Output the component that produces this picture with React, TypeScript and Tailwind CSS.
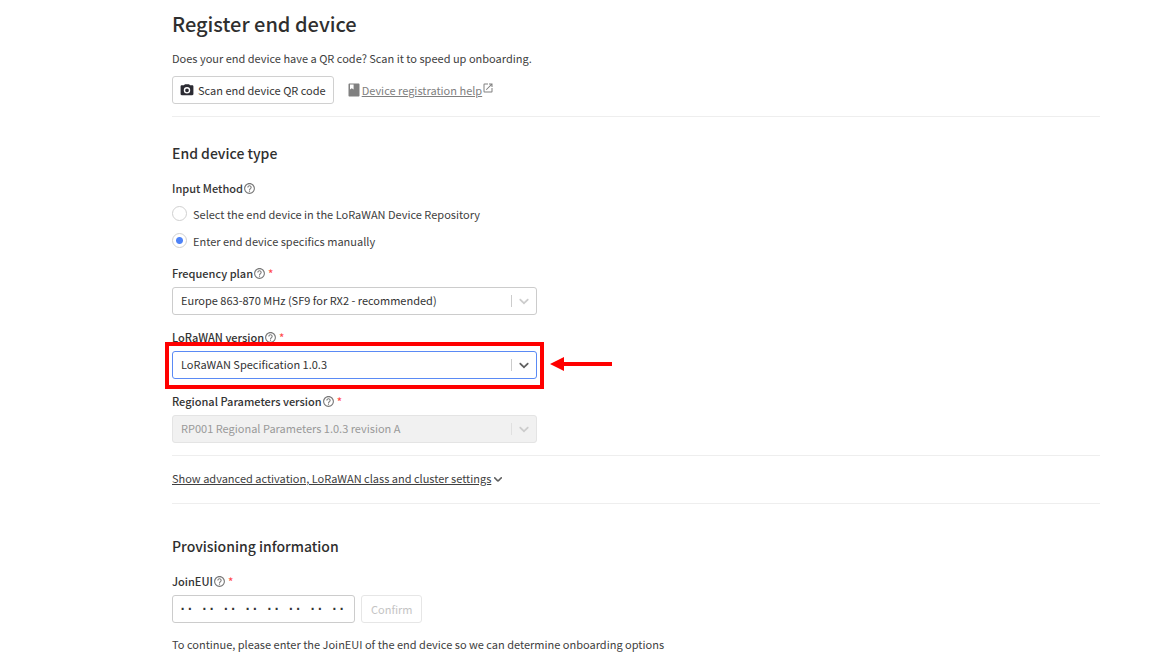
import { useState, type ReactNode } from "react";

function HelpIcon() {
  return (
    <svg viewBox="0 0 24 24" className="size-[13px] shrink-0 fill-[#777777]" aria-hidden="true">
      <path d="M11 18h2v-2h-2v2zm1-16C6.48 2 2 6.48 2 12s4.48 10 10 10 10-4.48 10-10S17.52 2 12 2zm0 18c-4.41 0-8-3.59-8-8s3.59-8 8-8 8 3.59 8 8-3.59 8-8 8zm0-14c-2.21 0-4 1.79-4 4h2c0-1.1.9-2 2-2s2 .9 2 2c0 2-3 1.75-3 5h2c0-2.25 3-2.5 3-5 0-2.21-1.79-4-4-4z" />
    </svg>
  );
}

function Chevron({ className }: { className: string }) {
  return (
    <svg viewBox="0 0 20 20" className={className} aria-hidden="true">
      <path d="M4.516 7.548c0.436-0.446 1.043-0.481 1.576 0l3.908 3.747 3.908-3.747c0.533-0.481 1.141-0.446 1.574 0 0.436 0.445 0.408 1.197 0 1.615-0.406 0.418-4.695 4.502-4.695 4.502-0.217 0.223-0.502 0.335-0.787 0.335s-0.57-0.112-0.789-0.335c0 0-4.287-4.084-4.695-4.502s-0.436-1.17 0-1.615z" />
    </svg>
  );
}

function Required() {
  return <span className="ml-0.5 text-[#ff4b4b]">*</span>;
}

function FieldLabel({ id, required, children }: { id: string; required?: boolean; children: ReactNode }) {
  return (
    <label htmlFor={id} className="flex h-5 items-center font-medium text-[#333333]">
      <span>{children}</span>
      <HelpIcon />
      {required && <Required />}
    </label>
  );
}

type SelectFieldProps = {
  id: string;
  label: string;
  value: string;
  selectClass: string;
  dividerClass: string;
  chevronClass: string;
  disabled?: boolean;
  children?: ReactNode;
};

function SelectField({ id, label, value, selectClass, dividerClass, chevronClass, disabled, children }: SelectFieldProps) {
  return (
    <div className="flex flex-col gap-1">
      <FieldLabel id={id} required>
        {label}
      </FieldLabel>
      <div className="relative w-full max-w-[365px]">
        <select id={id} disabled={disabled} className={selectClass}>
          <option>{value}</option>
        </select>
        <span className="pointer-events-none absolute inset-y-0 right-0 flex items-center gap-1 pr-[5px]">
          <span className={dividerClass} />
          <Chevron className={chevronClass} />
        </span>
        {children}
      </div>
    </div>
  );
}

function Radio({ id, label, checked, onChange }: { id: string; label: string; checked: boolean; onChange: () => void }) {
  return (
    <div className="flex h-[27px] items-center gap-1.5">
      <input
        id={id}
        type="radio"
        name="input-method"
        checked={checked}
        onChange={onChange}
        className="size-[15px] appearance-none rounded-full border border-[#d0d0d0] bg-white checked:bg-[radial-gradient(circle,#4f83f7_3px,#ffffff_4px)]"
      />
      <label htmlFor={id}>{label}</label>
    </div>
  );
}

export default function App() {
  const [method, setMethod] = useState("manual");
  const [eui, setEui] = useState("·· ·· ·· ·· ·· ·· ·· ··");

  return (
    <main className="bg-white pt-2 pr-[67px] pb-2 pl-[172px] font-['Noto_Sans_CJK_SC',sans-serif] text-[11px] leading-5 text-[#404040]">
      <h1 className="text-[20px] leading-8 font-medium text-[#2f2f2f]">Register end device</h1>
      <p className="mt-2">Does your end device have a QR code? Scan it to speed up onboarding.</p>
      <div className="mt-2 flex items-center gap-3.5 border-b border-[#eeeeee] pb-3">
        <button type="button" className="flex h-7 items-center gap-1 rounded-[3px] border border-[#d0d0d0] px-[7px] text-[#333333]">
          <svg viewBox="0 0 24 24" className="size-3.5 fill-[#2b2b33]" aria-hidden="true">
            <path fillRule="evenodd" d="M8.500 2 6.800 4H3C1.900 4 1 4.900 1 6v13c0 1.100.9 2 2 2h18c1.100 0 2-.9 2-2V6c0-1.100-.9-2-2-2h-3.800L15.500 2zM12 18a5.500 5.500 0 1 1 0-11 5.500 5.500 0 0 1 0 11zm0-2.300a3.200 3.200 0 1 0 0-6.400 3.200 3.200 0 0 0 0 6.400z" />
          </svg>
          Scan end device QR code
        </button>
        <a href="#help" className="flex items-center text-[#808080]">
          <svg viewBox="0 0 12 14" className="mr-0.5 h-3.5 w-3 fill-[#808080]" aria-hidden="true">
            <path fillRule="evenodd" d="M1.500 0.500h9c.6 0 1 .4 1 1v11c0 .6-.4 1-1 1h-9c-.6 0-1-.4-1-1v-11c0-.6.4-1 1-1zM2 1.500v5l1.800-1.300L5.600 6.500v-5z" />
          </svg>
          <span className="underline">Device registration help</span>
          <svg viewBox="0 0 24 24" className="mb-1 size-3 fill-[#808080]" aria-hidden="true">
            <path d="M19 19H5V5h7V3H5a2 2 0 0 0-2 2v14a2 2 0 0 0 2 2h14c1.100 0 2-.9 2-2v-7h-2v7zM14 3v2h3.590l-9.830 9.830 1.410 1.410L19 6.410V10h2V3h-7z" />
          </svg>
        </a>
      </div>

      <h2 className="mt-6 text-[14px] leading-6 font-medium text-[#2f2f2f]">End device type</h2>
      <fieldset className="mt-[13px]">
        <legend className="flex h-5 items-center font-medium text-[#333333]">
          <span>Input Method</span>
          <HelpIcon />
        </legend>
        <div className="mt-0.5">
          <Radio
            id="repository"
            label="Select the end device in the LoRaWAN Device Repository"
            checked={method === "repository"}
            onChange={() => setMethod("repository")}
          />
          <Radio
            id="manual"
            label="Enter end device specifics manually"
            checked={method === "manual"}
            onChange={() => setMethod("manual")}
          />
        </div>
      </fieldset>

      <div className="mt-[9px] flex flex-col gap-3 border-b border-[#eeeeee] pb-3">
        <SelectField
          id="frequency-plan"
          label="Frequency plan"
          value="Europe 863-870 MHz (SF9 for RX2 - recommended)"
          selectClass="h-7 w-full appearance-none rounded-[3px] border border-[#cccccc] bg-white px-2 pb-0.5 text-[#333333]"
          dividerClass="h-3 w-px bg-[#cccccc]"
          chevronClass="size-4 fill-[#cccccc]"
        />
        <SelectField
          id="lorawan-version"
          label="LoRaWAN version"
          value="LoRaWAN Specification 1.0.3"
          selectClass="h-7 w-full appearance-none rounded-[3px] border border-[#5a8af5] bg-white px-2 pb-0.5 text-[#333333] outline-none"
          dividerClass="h-3 w-px bg-[#cccccc]"
          chevronClass="size-4 fill-[#606060]"
        >
          <span className="pointer-events-none absolute -inset-x-[7px] -top-[9px] -bottom-[10px] border-4 border-[#ff0000]" />
          <svg viewBox="0 0 62 14" className="pointer-events-none absolute top-1.5 left-full ml-[13px] h-3.5 w-[62px] fill-[#ff0000]" aria-hidden="true">
            <path d="M0 7 14 0v5h48v4H14v5z" />
          </svg>
        </SelectField>
        <SelectField
          id="regional-parameters"
          label="Regional Parameters version"
          value="RP001 Regional Parameters 1.0.3 revision A"
          disabled
          selectClass="h-7 w-full appearance-none rounded-[3px] border border-[#e4e4e4] bg-[#f1f1f1] px-2 pb-0.5 text-[#999999] opacity-100"
          dividerClass="h-3 w-px bg-[#e0e0e0]"
          chevronClass="size-4 fill-[#cccccc]"
        />
      </div>

      <div className="border-b border-[#eeeeee] pt-3 pb-[15px]">
        <button type="button" className="flex items-center">
          <span className="underline">Show advanced activation, LoRaWAN class and cluster settings</span>
          <Chevron className="mt-0.5 size-3.5 fill-[#606060]" />
        </button>
      </div>

      <h2 className="mt-[30px] text-[14px] leading-6 font-medium text-[#2f2f2f]">Provisioning information</h2>
      <div className="mt-[13px] flex flex-col gap-1">
        <FieldLabel id="join-eui" required>
          JoinEUI
        </FieldLabel>
        <div className="flex gap-1.5">
          <input
            id="join-eui"
            type="text"
            value={eui}
            onChange={(event) => setEui(event.target.value)}
            className="h-7 w-[183px] rounded-[3px] border border-[#cccccc] px-1.5 font-['DejaVu_Sans_Mono',monospace] text-[12px] font-bold text-[#333333]"
          />
          <button type="button" disabled className="h-7 rounded-[3px] border border-[#e6e6e6] px-[9px] text-[#c4c4c4]">
            Confirm
          </button>
        </div>
      </div>
      <p className="mt-[11px]">To continue, please enter the JoinEUI of the end device so we can determine onboarding options</p>
    </main>
  );
}
